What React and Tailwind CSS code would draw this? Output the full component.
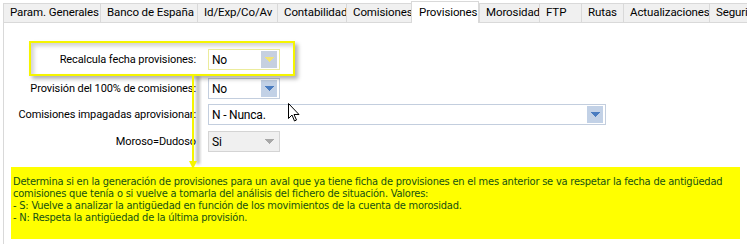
import React from "react";

const tabs = [
  ["Param. Generales", 97],
  ["Banco de España", 97],
  ["Id/Exp/Co/Av", 80],
  ["Contabilidad", 69],
  ["Comisiones", 65],
  ["Provisiones", 68, true],
  ["Morosidad", 60],
  ["FTP", 42],
  ["Rutas", 42],
  ["Actualizaciones", 86],
  ["Seguridad", 70],
];

function Arrow({ color }) {
  return (
    <svg width="9" height="5" viewBox="0 0 9 5">
      <path d="M0 0H9V1H8V2H7V3H6V4H5V5H4V4H3V3H2V2H1V1H0Z" fill={color} />
    </svg>
  );
}

function Combo({ value, width, variant = "normal" }) {
  const styles = {
    normal: "border-[#c3cede] bg-white",
    hl: "border-[#ecec9c] bg-white",
    disabled: "border-[#d4d4d4] bg-[#f0f0f0]",
  };
  const btn = {
    normal: "bg-[#c2d1e6]",
    hl: "bg-[#c6d0e0]",
    disabled: "bg-[#f0f0f0]",
  };
  const arrow = { normal: "#4a7cc0", hl: "#f2e472", disabled: "#a8a8a8" };
  return (
    <div
      className={`flex h-[21px] items-center border pl-[3px] pr-[2px] ${styles[variant]}`}
      style={{ width }}
    >
      <span className="flex-1 whitespace-nowrap text-[12px] leading-none tracking-[-0.2px] text-black">{value}</span>
      <div className={`flex h-[17px] w-[16px] items-center justify-center ${btn[variant]}`}>
        <Arrow color={arrow[variant]} />
      </div>
    </div>
  );
}

function Row({ label, children, className = "" }) {
  return (
    <div className={`flex items-center ${className}`}>
      <div className="w-[193px] whitespace-nowrap pr-[1px] text-right text-[11px] leading-none tracking-[-0.1px] text-black">
        {label}
      </div>
      <div className="ml-[11px]">{children}</div>
    </div>
  );
}

export default function App() {
  return (
    <div
      className="relative flex h-[244px] w-[747px] flex-col overflow-hidden bg-white"
      style={{ fontFamily: "Roboto, 'Liberation Sans', sans-serif" }}
    >
      {/* Tab strip */}
      <div className="flex h-[22px] shrink-0 items-end pl-[3px]">
        {tabs.map(([t, w, sel]) => (
          <div
            key={t}
            style={{ width: w }}
            className={
              sel
                ? "relative z-10 -mb-px flex h-[22px] shrink-0 items-start border border-b-0 border-[#d9d9d9] bg-white pl-[7px] pt-[3px] text-[11.5px] leading-[14px] tracking-[-0.1px] text-black"
                : "flex h-[19px] shrink-0 items-center border-l border-t border-[#d9d9d9] bg-[#f0f0f0] pl-[6px] text-[11.5px] tracking-[-0.1px] text-black last:border-r"
            }
          >
            <span className="whitespace-nowrap">{t}</span>
          </div>
        ))}
      </div>

      {/* Panel */}
      <div className="ml-[3px] flex flex-1 flex-col border-l border-t border-[#d9d9d9] bg-white">
        <Row label="Recalcula fecha provisiones:" className="mt-[26px]">
          <Combo value="No" width={72} variant="hl" />
        </Row>
        <Row label="Provisión del 100% de comisiones:" className="mt-[8px]">
          <Combo value="No" width={72} />
        </Row>
        <Row label="Comisiones impagadas aprovisionar:" className="mt-[5px]">
          <Combo value="N - Nunca." width={398} />
        </Row>
        <Row label="Moroso=Dudoso" className="mt-[6px]">
          <Combo value="Si" width={72} variant="disabled" />
        </Row>

        <div
          className="ml-[7px] mt-[15px] h-[72px] w-[729px] bg-[#ffff00] pl-[2px] pt-[9px] text-[11px] leading-[12px] tracking-[-0.22px] text-[#155212]"
          style={{ fontFamily: "'DejaVu Sans Condensed', 'DejaVu Sans', sans-serif" }}
        >
          <p className="whitespace-nowrap">Determina si en la generación de provisiones para un aval que ya tiene ficha de provisiones en el mes anterior se va respetar la fecha de antigüedad</p>
          <p className="whitespace-nowrap">comisiones que tenía o si vuelve a tomarla del análisis del fichero de situación. Valores:</p>
          <p className="whitespace-nowrap">- S: Vuelve a analizar la antigüedad en función de los movimientos de la cuenta de morosidad.</p>
          <p className="whitespace-nowrap">- N: Respeta la antigüedad de la última provisión.</p>
        </div>
      </div>

      {/* Highlight overlay */}
      <div className="pointer-events-none absolute left-[29px] top-[41px] h-[35px] w-[266px] border-2 border-[#f5f500] shadow-[3px_3px_4px_rgba(0,0,0,0.3),inset_3px_3px_4px_rgba(0,0,0,0.18)]" />

      {/* Connector arrow */}
      <svg className="pointer-events-none absolute left-[186px] top-[76px]" width="20" height="94" viewBox="0 0 20 94">
        <defs>
          <filter id="sh" x="-50%" y="-10%" width="200%" height="120%">
            <feGaussianBlur stdDeviation="1.5" />
          </filter>
        </defs>
        <rect x="10" y="0" width="4" height="88" fill="rgba(0,0,0,0.25)" filter="url(#sh)" />
        <rect x="6" y="0" width="2" height="88" fill="#f5f500" />
        <path d="M3 85 L11 85 L7 93 Z" fill="#f5f500" />
      </svg>

      {/* Mouse cursor */}
      <svg className="pointer-events-none absolute left-[288px] top-[103px]" width="12" height="19" viewBox="0 0 12 19">
        <path
          d="M0.5 0.5 L0.5 15.5 L4 12 L6.5 18 L8.5 17 L6 11.5 L11 11.5 Z"
          fill="#ffffff"
          stroke="#000000"
          strokeWidth="1"
          strokeLinejoin="miter"
        />
      </svg>
    </div>
  );
}
